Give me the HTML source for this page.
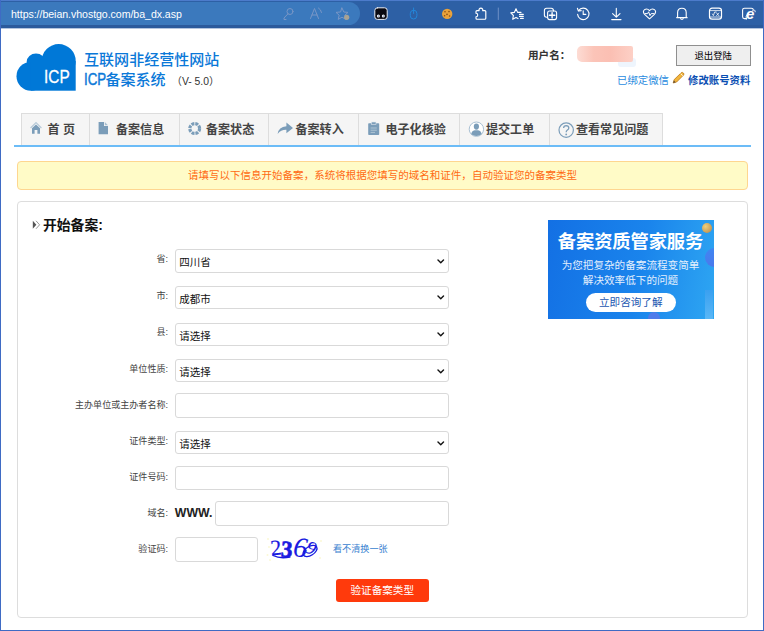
<!DOCTYPE html>
<html lang="zh-CN">
<head>
<meta charset="utf-8">
<title>ICP备案系统</title>
<style>
*{box-sizing:border-box;margin:0;padding:0}
html,body{width:764px;height:631px;overflow:hidden;background:#fff}
body{position:relative;font-family:"Liberation Sans","Noto Sans CJK SC",sans-serif;color:#333}
.abs{position:absolute}
#frame{left:0;top:0;width:764px;height:631px;border:1px solid #3f6bc4;border-top:none;pointer-events:none;z-index:50}
#bar{left:0;top:0;width:764px;height:28.4px;background:#2d60a5}
#bar .top{left:0;top:0;width:764px;height:1px;background:#4c7bcb}
#bar .pill{left:0;top:2px;width:360px;height:23px;background:#3b79bd;border-radius:0 12px 12px 0}
#bar .bot{left:0;top:25px;width:764px;height:3.4px;background:#2b5a9c}
#url{left:11px;top:7px;font-size:10.6px;color:#fff;line-height:14px;white-space:nowrap;letter-spacing:-0.05px}
.t1{left:84px;top:51px;font-size:15.05px;line-height:18px;color:#0a78d8;white-space:nowrap;font-weight:500}
.t2{left:84px;top:71px;font-size:15.05px;line-height:18px;color:#0a78d8;white-space:nowrap;font-weight:500}
.t2 b{font-weight:400;font-size:16.6px;display:inline-block;transform:scaleX(.8);transform-origin:0 50%;margin-right:-6.2px;-webkit-text-stroke:.45px #0a78d8}
.ver{left:171.5px;top:76px;font-size:10.4px;line-height:12px;color:#333;white-space:nowrap;letter-spacing:0}
#nav{left:21px;top:113px;height:33px;display:flex}
#nav .tab{height:32px;border:1px solid #ddd;border-bottom:none;border-left:none;background:#f5f5f5;font-weight:700;font-size:12.05px;color:#444;line-height:32px;white-space:nowrap;position:relative}
#nav .tab:first-child{border-left:1px solid #ddd}
#nav .tab span{position:absolute;top:0}
#navline{left:14px;top:145px;width:737px;height:2px;background:#6cbcf7}
#notice{left:17px;top:161px;width:731px;height:29px;background:#fffbc7;border:1px solid #fed690;border-radius:4px;color:#ff6a13;font-size:10.52px;line-height:27px;text-align:center;white-space:nowrap}
#panel{left:17px;top:201px;width:731px;height:417px;border:1px solid #ddd;border-radius:4px;background:#fff}
.h{left:43px;top:215.5px;font-size:13.8px;font-weight:700;color:#111;line-height:19px;white-space:nowrap}
.lab{width:160px;left:8px;text-align:right;font-size:9.05px;line-height:12px;color:#444;white-space:nowrap}
.sel{left:175.3px;width:273.6px;height:23.2px;border:1px solid #d9d9d9;border-radius:3px;background:#fff;font-size:10.5px;line-height:24.5px;overflow:hidden;color:#111;padding-left:3px;white-space:nowrap}
.sel svg{position:absolute;right:3.3px;top:8.6px}
.inp{left:175.3px;width:273.6px;height:24.4px;border:1px solid #d9d9d9;border-radius:3px;background:#fff}
.ico{position:absolute;left:0;top:0}
</style>
</head>
<body>
<div id="bar" class="abs">
  <div class="abs top"></div>
  <div class="abs pill"></div>
  <div class="abs bot"></div>
  <div class="abs" style="left:0;top:28px;width:764px;height:1px;background:#b4c5de"></div>
  <div id="url" class="abs">https://beian.vhostgo.com/ba_dx.asp</div>
  <svg class="ico" width="764" height="28" viewBox="0 0 764 28" fill="none" stroke-linecap="round" stroke-linejoin="round">
    <!-- dim icons inside address pill -->
    <g stroke="#7896c6" stroke-width="1">
      <circle cx="290" cy="11.5" r="3"/><path d="M288 13.8 L284 18 L284 19.5 L286 19.5"/>
      <path d="M310.5 18.5 L314.5 8.5 L318.5 18.5 M312 15 L317 15"/><path d="M318.5 8 Q321 9.5 321.5 12.5" />
      <path d="M342 8 L343.8 12 L348 12.4 L344.8 15.2 L345.8 19.4 L342 17.2 L338.2 19.4 L339.2 15.2 L336 12.4 L340.2 12 Z"/>
    </g>
    <circle cx="346.7" cy="17.3" r="2.6" fill="#a8a293"/>
    <!-- robot -->
    <rect x="374.8" y="7.8" width="12.4" height="11.6" rx="2.6" fill="#0a0a12" stroke="#e9eef8" stroke-width="1"/>
    <circle cx="378.4" cy="16" r="1.5" fill="#fff"/><circle cx="383.3" cy="16" r="1.5" fill="#fff"/>
    <circle cx="378.4" cy="16" r=".6" fill="#2b4f94"/><circle cx="383.3" cy="16" r=".6" fill="#2b4f94"/>
    <!-- mouse -->
    <g stroke="#2386da" stroke-width="1"><rect x="410.3" y="10.2" width="6.6" height="8.8" rx="3.3"/><path d="M413.6 8 L413.6 13.5"/></g>
    <!-- cookie -->
    <circle cx="447.2" cy="13.9" r="5.2" fill="#e9a23b"/>
    <g fill="#8a4b14"><circle cx="445" cy="11.8" r=".8"/><circle cx="449" cy="11.6" r=".8"/><circle cx="447" cy="14.4" r=".8"/><circle cx="444.6" cy="15.8" r=".8"/><circle cx="449.6" cy="16" r=".8"/></g>
    <!-- puzzle -->
    <path d="M477 10.6 h2.1 a1.9 1.9 0 1 1 3.6 0 h2.1 q1 0 1 1 v6.6 q0 1 -1 1 h-7.8 q-1 0 -1 -1 v-1.5 a1.75 1.75 0 1 0 0 -3.5 v-1.6 q0 -1 1 -1 z" stroke="#fff" stroke-width="1.15"/>
    <path d="M498.3 8 L498.3 19.5" stroke="#6d90c6" stroke-width="1"/>
    <!-- star list -->
    <g stroke="#fff" stroke-width="1.1">
      <path d="M516 8.8 L517.6 12.4 L521 12.4 M516 8.8 L514.3 12.4 L510.8 12.9 L513.4 15.5 L512.7 19.3 L516 17.5 L518 18.6"/>
      <path d="M519.5 14.4 L523.3 14.4 M519.5 16.4 L523.3 16.4 M520.5 18.4 L523.3 18.4"/>
    </g>
    <!-- collections -->
    <g stroke="#fff" stroke-width="1.1">
      <path d="M547.5 17.2 L546.6 17.2 Q544.4 17.2 544.4 15 L544.4 10.4 Q544.4 8.2 546.6 8.2 L551.2 8.2 Q553.4 8.2 553.4 10.4 L553.4 11"/>
      <rect x="547.6" y="11" width="9" height="8.6" rx="2"/>
      <path d="M552.1 12.6 L552.1 18 M549.4 15.3 L554.8 15.3" stroke-width="1.4"/>
    </g>
    <!-- history -->
    <g stroke="#fff" stroke-width="1.1">
      <path d="M578.6 10.6 A5.7 5.7 0 1 1 577.6 14.4"/><path d="M577.4 8.2 L578.4 11 L581.2 10.6"/>
      <path d="M583.2 10.8 L583.2 14.4 L585.8 14.4"/>
    </g>
    <!-- download -->
    <g stroke="#fff" stroke-width="1.1">
      <path d="M616.3 8.4 L616.3 17 M612.6 13.6 L616.3 17.2 L620 13.6 M611.7 19.6 L621 19.6"/>
    </g>
    <!-- heartbeat -->
    <g stroke="#fff" stroke-width="1.1">
      <path d="M649.5 18.8 L644.6 14.4 Q642.2 11.6 644.6 9.6 Q647.2 8 649.5 10.6 Q651.8 8 654.4 9.6 Q656.8 11.6 654.4 14.4 Z"/>
      <path d="M645.4 13.6 L647.6 13.6 L648.6 11.8 L650 15.6 L651.2 13.6 L653.6 13.6" stroke-width="1"/>
    </g>
    <!-- bell -->
    <g stroke="#fff" stroke-width="1.1">
      <path d="M677.6 17 L677.6 12.6 Q677.6 8.2 681.9 8.2 Q686.2 8.2 686.2 12.6 L686.2 17 L687.2 17.6 L676.6 17.6 Z"/>
      <path d="M680.6 18.6 Q681.9 20 683.2 18.6"/>
    </g>
    <!-- math -->
    <g stroke="#fff" stroke-width="1.2">
      <rect x="709.5" y="8.2" width="12" height="11" rx="2.6"/>
      <path d="M709.6 10.6 L721.4 10.6 M709.6 17 L721.4 17" stroke-width=".8"/>
      <path d="M712.4 14 L713.4 15.6 L714.6 12 L716.2 12 M716.6 13 L718.8 15.6 M718.8 13 L716.6 15.6" stroke-width=".8"/>
    </g>
    <!-- ie -->
    <g stroke="#fff" stroke-width="1.1">
      <path d="M746.6 18.6 L744.4 18.6 Q742.6 18.6 742.6 16.8 L742.6 10 Q742.6 8.2 744.4 8.2 L751.4 8.2 Q753.2 8.2 753.2 9.6"/>
    </g>
    <text x="746" y="19.2" font-family="Liberation Sans, sans-serif" font-weight="700" font-style="italic" font-size="15" fill="#fff" stroke="#2d60a5" stroke-width=".4" paint-order="stroke">e</text>
    <path d="M746.2 19.2 Q745 16.6 748 13.2 M752.6 10.6 Q755.6 9 755.2 11.8" stroke="#fff" stroke-width=".9"/>
  </svg>
</div>

<!-- logo -->
<svg class="abs" style="left:14px;top:42px" width="66" height="52" viewBox="0 0 66 52">
  <g fill="#0078d7">
    <circle cx="16.9" cy="34.3" r="14.4"/>
    <ellipse cx="22" cy="20" rx="9.35" ry="8.45"/>
    <circle cx="44.7" cy="19.1" r="17"/>
    <rect x="16.9" y="19.1" width="44.8" height="29.6"/>
  </g>
  <text x="30.1" y="40.9" font-family="Liberation Sans, sans-serif" font-size="18.3" fill="#fff" stroke="#fff" stroke-width=".3" textLength="25.6" lengthAdjust="spacingAndGlyphs">ICP</text>
</svg>
<div class="abs t1">互联网非经营性网站</div>
<div class="abs t2"><b>ICP</b>备案系统</div>
<div class="abs ver">（V- 5.0）</div>

<!-- user area -->
<div class="abs" style="left:528px;top:48px;font-size:10.6px;font-weight:700;color:#333;line-height:14px;white-space:nowrap">用户名：</div>
<div class="abs" style="left:618px;top:58px;width:18px;height:9px;background:#eef5fd;border-radius:3px"></div>
<div class="abs" style="left:577px;top:46px;width:56px;height:16px;background:linear-gradient(90deg,#fddcd4 0%,#fbc4b8 30%,#fbbfb3 60%,#fdd0c6 100%);border-radius:5px 2px 2px 5px"></div>
<div class="abs" style="left:675.5px;top:45px;width:75.5px;height:20.5px;border:1px solid #8f8f8f;background:#efefef;font-size:9.4px;line-height:19px;text-align:center;color:#000;white-space:nowrap">退出登陆</div>
<div class="abs" style="left:617px;top:73.6px;font-size:10.4px;line-height:14px;color:#2a8be0;white-space:nowrap">已绑定微信</div>
<svg class="abs" style="left:671px;top:71px" width="15" height="14" viewBox="0 0 15 14">
  <path d="M2.2 12 L3.2 8.6 L10.4 1.6 Q11.4 1 12.4 2 Q13.4 3 12.6 4 L5.6 11 Z" fill="#f2b53c" stroke="#b9781c" stroke-width=".8" stroke-linejoin="round"/>
  <path d="M2.2 12 L2.9 9.6 L4.6 11.3 Z" fill="#5a4a3a"/>
  <path d="M9.6 2.6 L11.8 4.8" stroke="#fff" stroke-width=".8"/>
</svg>
<div class="abs" style="left:688px;top:73.6px;font-size:10.4px;line-height:14px;color:#0b4fb3;font-weight:700;white-space:nowrap">修改账号资料</div>

<!-- nav -->
<div id="nav" class="abs">
  <div class="tab" style="width:69px"><span style="left:25.5px">首 页</span></div>
  <div class="tab" style="width:90px"><span style="left:26px">备案信息</span></div>
  <div class="tab" style="width:89px"><span style="left:26px">备案状态</span></div>
  <div class="tab" style="width:90px"><span style="left:26.5px">备案转入</span></div>
  <div class="tab" style="width:101px"><span style="left:26.5px">电子化核验</span></div>
  <div class="tab" style="width:90px"><span style="left:26px">提交工单</span></div>
  <div class="tab" style="width:113px"><span style="left:26px">查看常见问题</span></div>
</div>
<svg class="abs" style="left:0;top:113px" width="764" height="32" viewBox="0 113 764 32" fill="none">
  <!-- home -->
  <path d="M30.6 128 L36 122.6 L41.4 128" stroke="#b9cbd9" stroke-width="1.3"/>
  <path d="M32 128.2 L36 124.4 L40 128.2 L40 133.8 L37.4 133.8 L37.4 130 L34.6 130 L34.6 133.8 L32 133.8 Z" fill="#7b9db9"/>
  <!-- file -->
  <path d="M98.6 122 L104 122 L104 126 L108 126 L108 134.2 L98.6 134.2 Z" fill="#7b9db9"/>
  <path d="M104.8 122 L108 125.2 L104.8 125.2 Z" fill="#a9bfd0"/>
  <!-- ring -->
  <circle cx="194.7" cy="128.5" r="4.9" stroke="#7b9db9" stroke-width="3.2" stroke-dasharray="2.9 .95"/>
  <!-- share arrow -->
  <path d="M277.6 134 Q278.6 126.6 286.4 126.2 L286.4 122.6 L293 128 L286.4 133.2 L286.4 129.8 Q281 129.6 277.6 134 Z" fill="#7b9db9"/>
  <!-- clipboard -->
  <rect x="368.2" y="123.2" width="11" height="11.8" rx=".8" fill="#7b9db9"/>
  <rect x="371.4" y="122" width="4.6" height="2.6" fill="#7b9db9" stroke="#dfe7ee" stroke-width=".6"/>
  <path d="M370.6 128 L376.8 128 M370.6 130.2 L376.8 130.2 M370.6 132.4 L375 132.4" stroke="#b5c8d7" stroke-width=".9"/>
  <!-- user -->
  <circle cx="476.4" cy="129.2" r="7.2" fill="#fff" stroke="#a9c0d3" stroke-width="1"/>
  <ellipse cx="476.4" cy="126.6" rx="2.6" ry="3.1" fill="#7b9db9"/>
  <path d="M471.2 134.2 Q471.6 130.6 474.6 130.2 L478.2 130.2 Q481.2 130.6 481.6 134.2 Q476.4 137.6 471.2 134.2 Z" fill="#7b9db9"/>
  <!-- question -->
  <circle cx="566.2" cy="130.1" r="7.2" stroke="#7b9db9" stroke-width="1.2"/>
  <path d="M563.6 128 Q563.7 125.6 566.2 125.6 Q568.8 125.7 568.8 128 Q568.8 129.4 567.2 130.2 Q566.2 130.8 566.2 132.2" stroke="#7b9db9" stroke-width="1.3"/>
  <circle cx="566.2" cy="134.4" r=".9" fill="#7b9db9"/>
</svg>
<div id="navline" class="abs"></div>

<div id="notice" class="abs">请填写以下信息开始备案，系统将根据您填写的域名和证件，自动验证您的备案类型</div>

<div id="panel" class="abs"></div>
<svg class="abs" style="left:32px;top:220px" width="9" height="10" viewBox="0 0 9 10">
  <path d="M.8 .8 L4.4 4.8 L.8 8.8 Z" fill="#555"/>
  <path d="M4 .8 L7.6 4.8 L4 8.8" fill="none" stroke="#999" stroke-width="1"/>
</svg>
<div class="abs h">开始备案:</div>

<div class="abs lab" style="top:253px">省:</div>
<div class="abs sel" style="top:249.4px">四川省<svg width="7.5" height="5" viewBox="0 0 9 6"><path d="M1.2 1.2 L4.5 4.4 L7.8 1.2" fill="none" stroke="#111" stroke-width="1.7" stroke-linecap="round" stroke-linejoin="round"/></svg></div>
<div class="abs lab" style="top:290px">市:</div>
<div class="abs sel" style="top:285.9px">成都市<svg width="7.5" height="5" viewBox="0 0 9 6"><path d="M1.2 1.2 L4.5 4.4 L7.8 1.2" fill="none" stroke="#111" stroke-width="1.7" stroke-linecap="round" stroke-linejoin="round"/></svg></div>
<div class="abs lab" style="top:326px">县:</div>
<div class="abs sel" style="top:322.5px">请选择<svg width="7.5" height="5" viewBox="0 0 9 6"><path d="M1.2 1.2 L4.5 4.4 L7.8 1.2" fill="none" stroke="#111" stroke-width="1.7" stroke-linecap="round" stroke-linejoin="round"/></svg></div>
<div class="abs lab" style="top:363px">单位性质:</div>
<div class="abs sel" style="top:359px">请选择<svg width="7.5" height="5" viewBox="0 0 9 6"><path d="M1.2 1.2 L4.5 4.4 L7.8 1.2" fill="none" stroke="#111" stroke-width="1.7" stroke-linecap="round" stroke-linejoin="round"/></svg></div>
<div class="abs lab" style="top:399px">主办单位或主办者名称:</div>
<div class="abs inp" style="top:393px;height:25px"></div>
<div class="abs lab" style="top:435px">证件类型:</div>
<div class="abs sel" style="top:431.3px">请选择<svg width="7.5" height="5" viewBox="0 0 9 6"><path d="M1.2 1.2 L4.5 4.4 L7.8 1.2" fill="none" stroke="#111" stroke-width="1.7" stroke-linecap="round" stroke-linejoin="round"/></svg></div>
<div class="abs lab" style="top:471px">证件号码:</div>
<div class="abs inp" style="top:465.8px"></div>
<div class="abs lab" style="top:507px">域名:</div>
<div class="abs" style="left:174.8px;top:504.6px;font-size:12.3px;font-weight:700;color:#222;line-height:16px;white-space:nowrap">WWW.</div>
<div class="abs inp" style="top:501.4px;left:215px;width:233.9px"></div>
<div class="abs lab" style="top:543px">验证码:</div>
<div class="abs inp" style="top:537.2px;width:83px"></div>
<svg class="abs" style="left:266px;top:533px" width="58" height="32" viewBox="0 0 58 32">
  <g fill="#fbf9d6"><circle cx="2" cy="6" r="1"/><circle cx="3" cy="14" r="1"/><circle cx="1.5" cy="22" r="1"/><circle cx="4" cy="27" r="1"/><circle cx="55" cy="8" r="1"/><circle cx="54" cy="25" r="1"/></g>
  <g font-family="Liberation Serif, serif" fill="#1a1ae0" stroke="#1a1ae0">
    <text x="4.5" y="22" font-size="22" stroke-width=".15" transform="rotate(-6 10 16)">2</text>
    <text x="15" y="24" font-size="23" font-weight="700" stroke-width=".7" transform="rotate(4 22 16)">3</text>
    <text x="27.5" y="23.5" font-size="28" font-style="italic" stroke-width=".1" transform="rotate(6 32 14)">6</text>
    <text x="39" y="21" font-size="19" font-style="italic" stroke-width=".1" transform="rotate(24 44 18)">9</text>
  </g>
  <g fill="none" stroke="#1a1ae0" stroke-width="1.3" stroke-linecap="round">
    <ellipse cx="44" cy="18" rx="7.8" ry="4.4" transform="rotate(-32 44 18)"/>
    <path d="M7 22.5 Q14 26 24 24"/>
  </g>
</svg>
<div class="abs" style="left:333px;top:543px;font-size:9.1px;line-height:12px;color:#3a7fd0;white-space:nowrap">看不清换一张</div>
<div class="abs" style="left:335.5px;top:579px;width:93.5px;height:23px;background:#ff3a0c;border-radius:3px;color:#fff;font-size:10.6px;line-height:23px;text-align:center;white-space:nowrap">验证备案类型</div>

<!-- banner -->
<div class="abs" style="left:548px;top:220px;width:165.5px;height:99px;background:linear-gradient(100deg,#1370e4 0%,#1a84ec 55%,#2ea6f2 100%);overflow:hidden;color:#fff;text-align:center;white-space:nowrap">
  <div class="abs" style="left:153.5px;top:2.5px;width:10px;height:10px;border-radius:50%;background:radial-gradient(circle at 35% 35%,#f0cf7a,#c79a55 70%,#8f86b8)"></div>
  <div class="abs" style="left:157px;top:28px;width:20px;height:19px;border-radius:50%;background:linear-gradient(180deg,#3f86f2,#4b79ec)"></div>
  <div class="abs" style="left:157px;top:70px;width:8px;height:30px;background:linear-gradient(180deg,#3aa0f0,#5bb8f6)"></div>
  <div class="abs" style="left:100px;top:92px;width:12px;height:12px;border-radius:50%;background:#4f7bea"></div>
  <div class="abs" style="left:0;width:165px;top:10px;font-size:18.3px;font-weight:700;line-height:24px;letter-spacing:-0.1px">备案资质管家服务</div>
  <div class="abs" style="left:0;width:165px;top:38px;font-size:10.6px;line-height:14px;color:#e4effd">为您把复杂的备案流程变简单</div>
  <div class="abs" style="left:0;width:165px;top:52.5px;font-size:10.6px;line-height:14px;color:#e4effd">解决效率低下的问题</div>
  <div class="abs" style="left:37.5px;top:72.5px;width:90.5px;height:19.5px;border-radius:10px;background:#fff;color:#1a56b0;font-size:10.6px;line-height:19.5px">立即咨询了解</div>
</div>

<div id="frame" class="abs"></div>
</body>
</html>
